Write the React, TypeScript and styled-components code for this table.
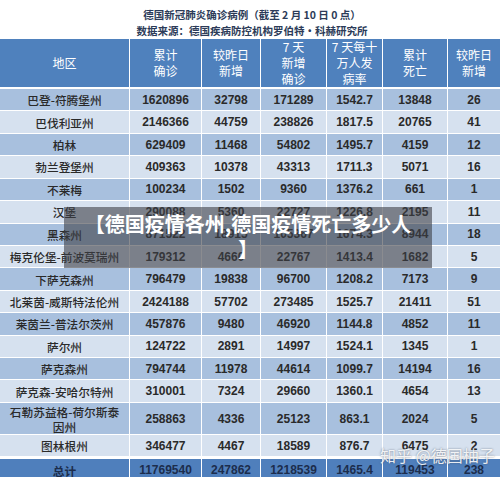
import React from "react"
import styled, { createGlobalStyle } from "styled-components"

const GlobalStyle = createGlobalStyle`
  html, body {
    margin: 0;
    padding: 0;
    background: #ffffff;
  }
  body {
    font-family: "Liberation Sans", "Noto Sans CJK SC", sans-serif;
  }
`

const CJK = `"Noto Sans CJK SC", "Liberation Sans", sans-serif`
const NUM = `"Liberation Sans", "Noto Sans CJK SC", sans-serif`
const COLS = "129px 71px 58px 65px 55px 64px 1fr"

const Page = styled.div`
  position: relative;
  width: 500px;
  height: 477px;
  overflow: hidden;
  background: #ffffff;
`

const TitleBlock = styled.div`
  height: 39px;
  padding-top: 7px;
  box-sizing: border-box;
  text-align: center;
  font-family: ${CJK};
  font-weight: 700;
  font-size: 10.5px;
  line-height: 16px;
  color: #2c3b58;
  padding-left: 4px;
`

const TitleLine = styled.div`
  white-space: nowrap;
`

const Table = styled.div`
  display: flex;
  flex-direction: column;
  gap: 1px;
`

const HeaderRow = styled.div`
  display: grid;
  grid-template-columns: ${COLS};
  column-gap: 1px;
  height: 48px;
  margin-bottom: 1px;
`

const HeadCell = styled.div`
  background: #4f81bd;
  color: #ffffff;
  font-family: ${CJK};
  font-size: 12px;
  line-height: 16px;
  display: flex;
  align-items: center;
  justify-content: center;
  text-align: center;
  overflow: hidden;
`

const Row = styled.div<{ $h: number }>`
  display: grid;
  grid-template-columns: ${COLS};
  column-gap: 1px;
  height: ${p => p.$h}px;
`

const Cell = styled.div<{ $dark: boolean; $total?: boolean }>`
  background: ${p => (p.$total ? "#4f7fbc" : p.$dark ? "#a8c0de" : "#d6e1ef")};
  color: ${p => (p.$total ? "#1c2d4c" : "#2a2a2a")};
  display: flex;
  align-items: center;
  justify-content: center;
  text-align: center;
  font-family: ${NUM};
  font-weight: 700;
  font-size: 12px;
`

const RegionCell = styled(Cell)`
  font-family: ${CJK};
  font-weight: ${p => (p.$total ? 700 : 500)};
  font-size: 11.7px;
  line-height: 15px;
  padding: 0 6px;
`

const TotalGap = styled.div`
  height: 1px;
`

const Banner = styled.div`
  position: absolute;
  left: 64px;
  top: 207px;
  width: 368px;
  height: 61px;
  padding-top: 4px;
  box-sizing: border-box;
  background: rgba(62, 64, 70, 0.6);
  color: #ffffff;
  font-family: ${CJK};
  font-weight: 700;
  font-size: 20px;
  line-height: 25px;
  text-align: center;
  white-space: nowrap;
`

const Watermark = styled.div`
  position: absolute;
  left: 380px;
  top: 443px;
  font-family: ${CJK};
  font-size: 16px;
  color: rgba(255, 255, 255, 0.88);
  text-shadow: 0 0 2px rgba(60, 70, 90, 0.7);
  white-space: nowrap;
`

const headers = [
  ["地区"],
  ["累计", "确诊"],
  ["较昨日", "新增"],
  ["7 天", "新增", "确诊"],
  ["7 天每十", "万人发", "病率"],
  ["累计", "死亡"],
  ["较昨日", "新增"],
]

const rows: (string | number)[][] = [
  ["巴登-符腾堡州", 1620896, 32798, 171289, "1542.7", 13848, 26],
  ["巴伐利亚州", 2146366, 44759, 238826, "1817.5", 20765, 41],
  ["柏林", 629409, 11468, 54802, "1495.7", 4159, 12],
  ["勃兰登堡州", 409363, 10378, 43313, "1711.3", 5071, 16],
  ["不莱梅", 100234, 1502, 9360, "1376.2", 661, 1],
  ["汉堡", 290088, 5360, 22727, "1226.8", 2195, 11],
  ["黑森州", 871522, 18915, 105367, "1674.3", 8944, 18],
  ["梅克伦堡-前波莫瑞州", 179312, 4660, 22767, "1413.4", 1682, 5],
  ["下萨克森州", 796479, 19838, 96700, "1208.2", 7173, 9],
  ["北莱茵-威斯特法伦州", 2424188, 57702, 273485, "1525.7", 21411, 51],
  ["莱茵兰-普法尔茨州", 457876, 9480, 46920, "1144.8", 4852, 11],
  ["萨尔州", 124722, 2891, 14997, "1524.1", 1345, 1],
  ["萨克森州", 794744, 11978, 44614, "1099.7", 14194, 16],
  ["萨克森-安哈尔特州", 310001, 7324, 29660, "1360.1", 4654, 13],
  ["石勒苏益格-荷尔斯泰因州", 258863, 4336, 25123, "863.1", 2024, 5],
  ["图林根州", 346477, 4467, 18589, "876.7", 6475, 2],
]

const total = ["总计", 11769540, 247862, 1218539, "1465.4", 119453, 238]

const rowHeight = (i: number) => (i === 14 ? 31.5 : i === 15 ? 21 : 21.43)

export default function App() {
  return (
    <Page>
      <GlobalStyle />
      <TitleBlock>
        <TitleLine>德国新冠肺炎确诊病例（截至 2 月 10 日 0 点）</TitleLine>
        <TitleLine>数据来源：德国疾病防控机构罗伯特·科赫研究所</TitleLine>
      </TitleBlock>

      <Table>
        <HeaderRow>
          {headers.map((lines, i) => (
            <HeadCell key={i}>
              <div>
                {lines.map(l => (
                  <div key={l}>{l}</div>
                ))}
              </div>
            </HeadCell>
          ))}
        </HeaderRow>

        {rows.map((r, i) => (
          <Row key={r[0] as string} $h={rowHeight(i)}>
            <RegionCell $dark={i % 2 === 0}>{r[0]}</RegionCell>
            {r.slice(1).map((v, j) => (
              <Cell key={j} $dark={i % 2 === 0}>
                {v}
              </Cell>
            ))}
          </Row>
        ))}

        <TotalGap />
        <Row $h={22}>
          <RegionCell $dark $total>
            {total[0]}
          </RegionCell>
          {total.slice(1).map((v, j) => (
            <Cell key={j} $dark $total>
              {v}
            </Cell>
          ))}
        </Row>
      </Table>

      <Banner>
        【德国疫情各州,德国疫情死亡多少人
        <br />】
      </Banner>

      <Watermark>知乎 @德国柚子</Watermark>
    </Page>
  )
}
